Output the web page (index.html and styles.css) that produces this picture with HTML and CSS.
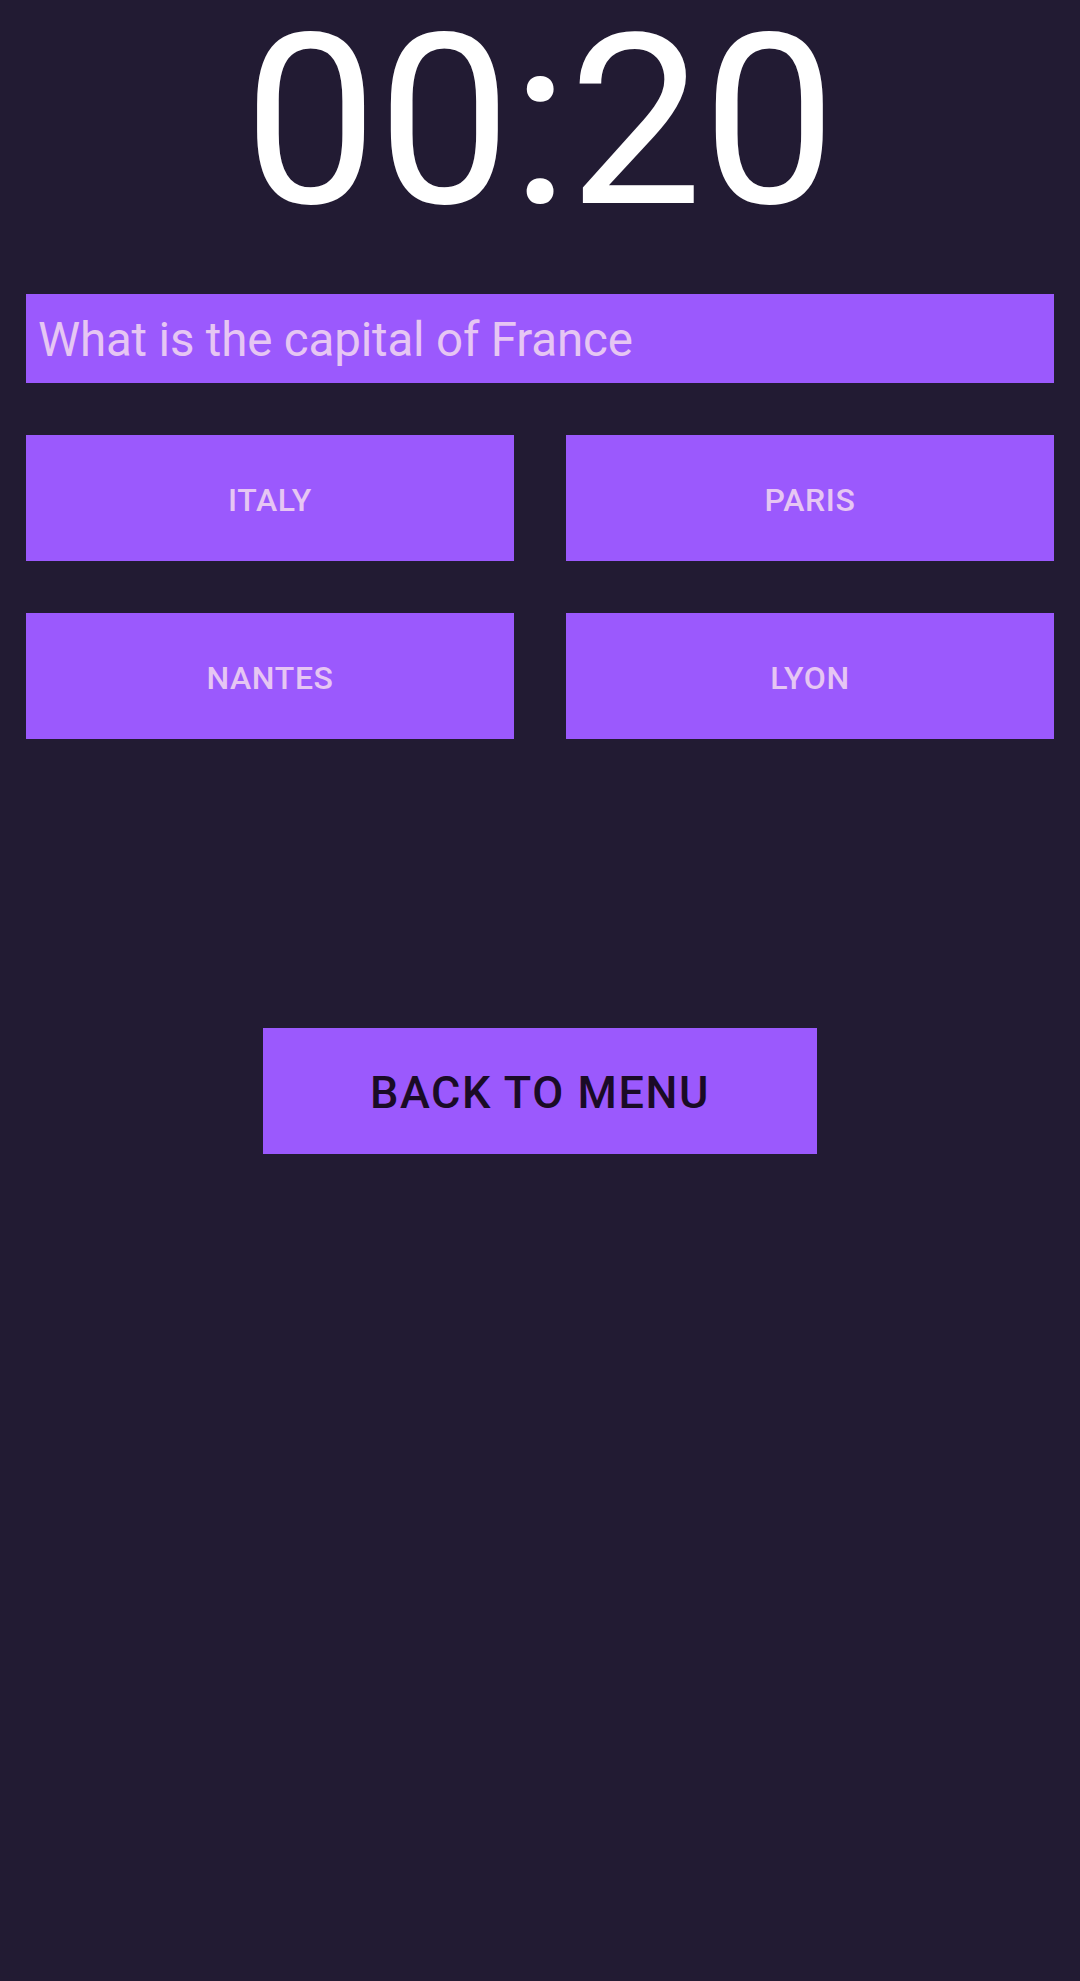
FILE: index.html
```html
<!DOCTYPE html>
<html>
<head>
<meta charset="utf-8">
<link rel="stylesheet" href="styles.css">
</head>
<body>
<div class="screen">
  <div class="timer">00:20</div>
  <div class="question">What is the capital of France</div>
  <div class="answers">
    <div class="answer">ITALY</div>
    <div class="answer">PARIS</div>
    <div class="answer">NANTES</div>
    <div class="answer">LYON</div>
  </div>
  <div class="back-wrap">
    <div class="back">BACK TO MENU</div>
  </div>
</div>
</body>
</html>
```
FILE: styles.css
```css
html, body {
  margin: 0;
  padding: 0;
  background: #221b33;
}
.screen {
  width: 1080px;
  height: 1981px;
  box-sizing: border-box;
  padding: 0 26px;
  display: flex;
  flex-direction: column;
  font-family: Roboto, "Liberation Sans", sans-serif;
}
.timer {
  margin-top: 2px;
  font-size: 238px;
  line-height: 240px;
  color: #ffffff;
  text-align: center;
}
.question {
  margin-top: 52px;
  height: 89px;
  box-sizing: border-box;
  padding: 4px 12px 0;
  line-height: 85px;
  font-size: 47.5px;
  letter-spacing: -0.18px;
  color: #e6c6f3;
  background: #9b59fd;
}
.answers {
  margin-top: 52px;
  display: grid;
  grid-template-columns: 1fr 1fr;
  column-gap: 52px;
  row-gap: 52px;
}
.answer {
  height: 126px;
  display: flex;
  align-items: center;
  justify-content: center;
  background: #9b59fd;
  color: #e6c6f3;
  font-size: 32px;
  font-weight: 500;
  letter-spacing: 0.02em;
  padding-top: 4px;
  box-sizing: border-box;
}
.back-wrap {
  margin-top: 289px;
  display: flex;
  justify-content: center;
}
.back {
  width: 554px;
  height: 126px;
  display: flex;
  align-items: center;
  justify-content: center;
  background: #9b59fd;
  color: #1a0b26;
  font-size: 45px;
  font-weight: 500;
  letter-spacing: 0.035em;
  padding-top: 2px;
  box-sizing: border-box;
}
```
